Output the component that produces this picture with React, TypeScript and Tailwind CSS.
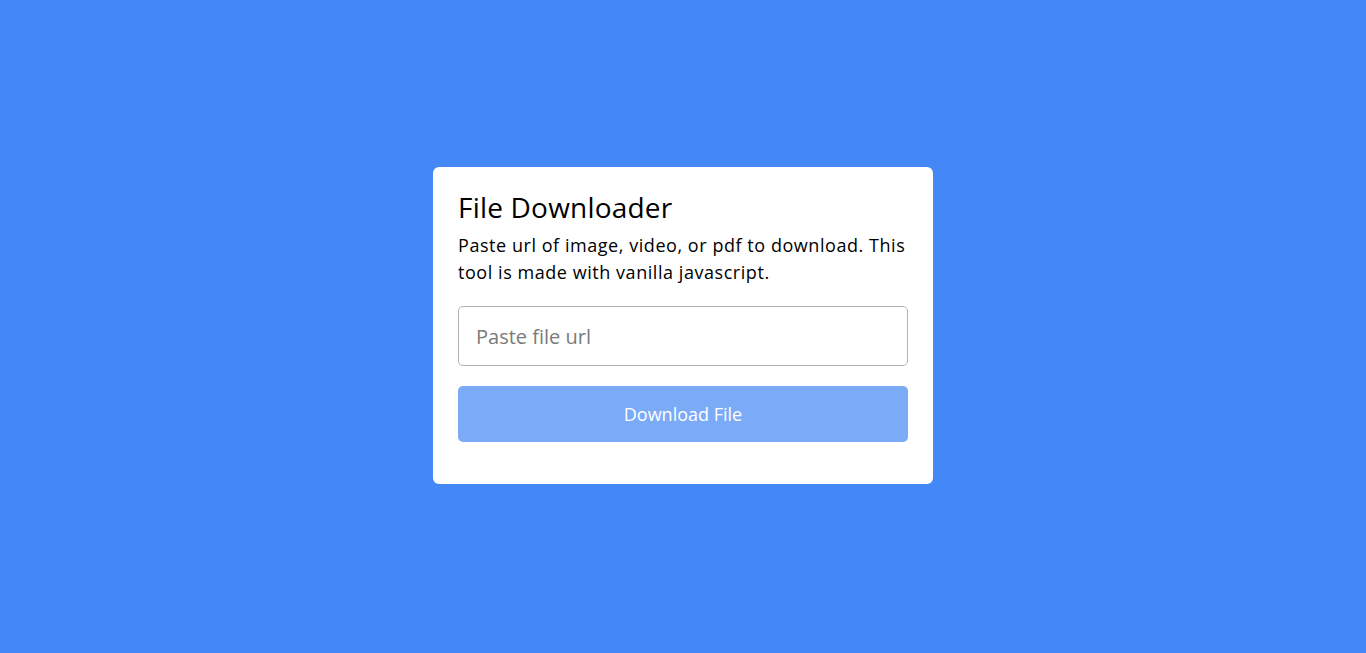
import { useState } from 'react';

export default function App() {
  const [url, setUrl] = useState('');

  return (
    <div
      className="min-h-screen w-full bg-[#4388f6] flex items-center justify-center pb-[2px]"
      style={{ fontFamily: '"Open Sans", "Noto Sans", sans-serif' }}
    >
      <div className="w-[500px] bg-white rounded-[6px] px-[25px] pt-[22px] pb-[42px]">
        <h1 className="text-[28px] leading-[36px] font-medium tracking-[0.2px] text-black">File Downloader</h1>
        <p className="mt-[7px] text-[18px] leading-[27px] tracking-[0.55px] text-black">
          Paste url of image, video, or pdf to download. This tool is made with vanilla javascript.
        </p>
        <input
          type="text"
          value={url}
          onChange={(e) => setUrl(e.target.value)}
          placeholder="Paste file url"
          className="mt-[20px] w-full h-[60px] px-[17px] text-[20px] border border-[#b3b3b3] rounded-[5px] outline-none placeholder:text-[#7a7a7a]"
        />
        <button className="mt-[20px] w-full h-[56px] rounded-[5px] bg-[#7baaf7] text-white text-[18px]">
          Download File
        </button>
      </div>
    </div>
  );
}
